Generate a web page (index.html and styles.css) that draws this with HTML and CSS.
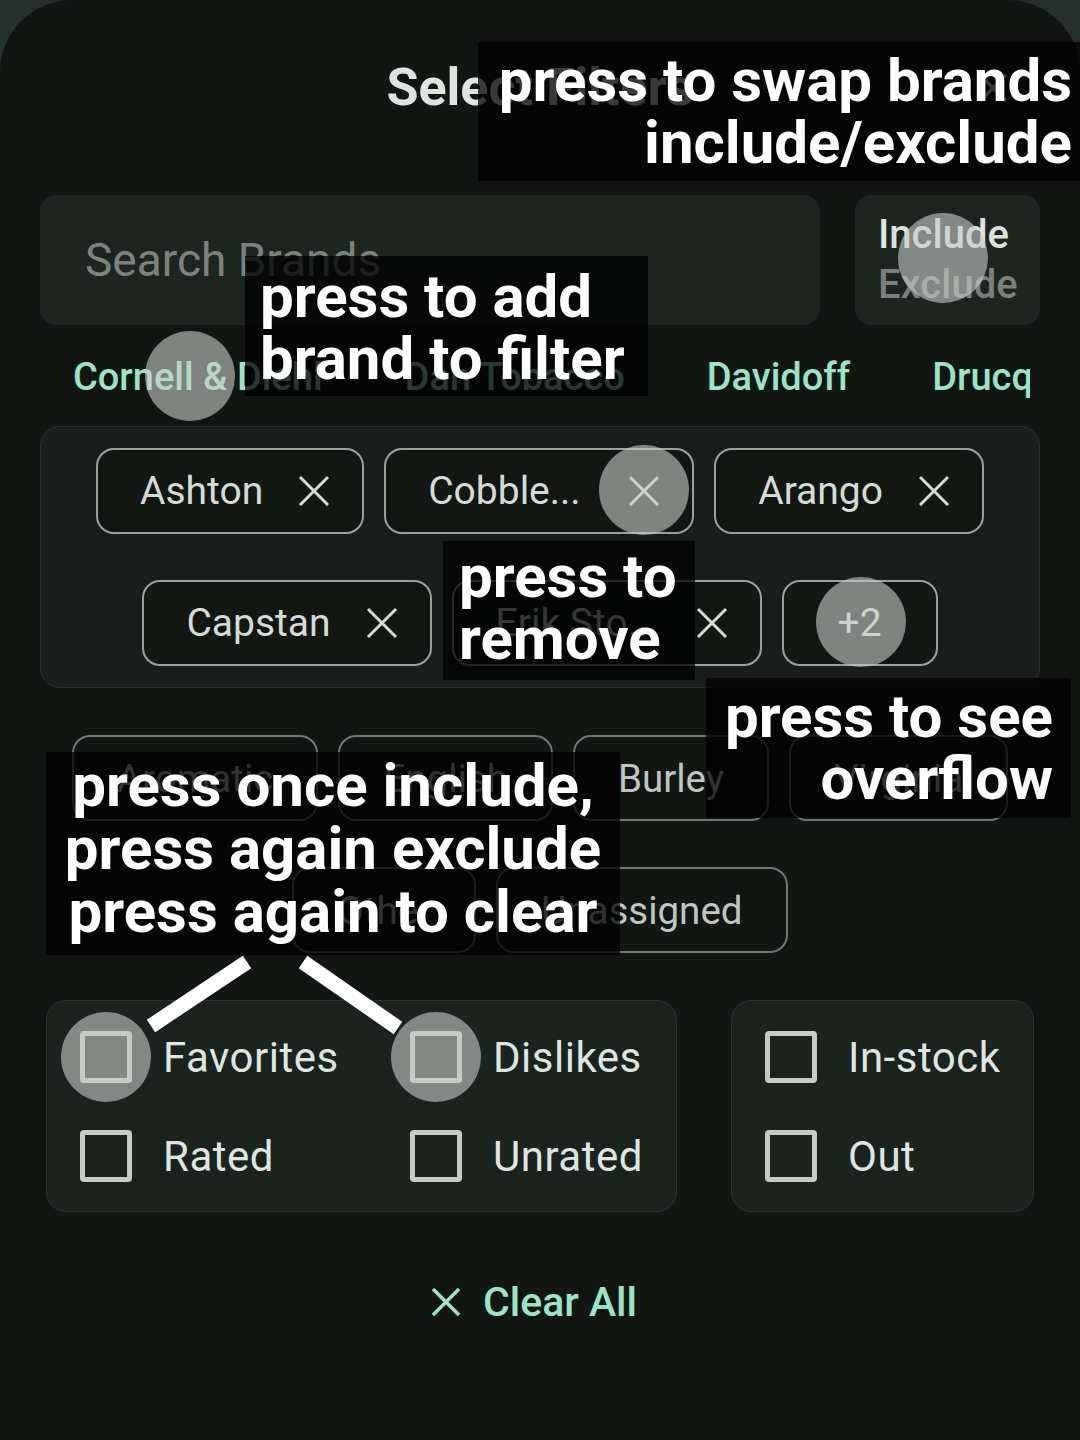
FILE: index.html
```html
<!DOCTYPE html>
<html>
<head>
<meta charset="utf-8">
<link rel="stylesheet" href="styles.css">
</head>
<body>
<div class="sheet">
  <div class="header">
    <div></div>
    <h1 class="title">Select Filters</h1>
    <div class="close-wrap">
      <svg class="close-icon" viewBox="0 0 34 34"><path d="M4 4 L30 30 M30 4 L4 30" /></svg>
    </div>
  </div>

  <div class="search-row">
    <div class="search-field">Search Brands</div>
    <div class="toggle">
      <span class="toggle-on">Include</span>
      <span class="toggle-off">Exclude</span>
    </div>
  </div>

  <div class="suggest-row">
    <span class="suggest">Cornell &amp; Diehl</span>
    <span class="suggest">Dan Tobacco</span>
    <span class="suggest">Davidoff</span>
    <span class="suggest">Drucq</span>
  </div>

  <div class="selected-box">
    <div class="chip-row">
      <div class="chip sel">Ashton<svg class="x" viewBox="0 0 34 34"><path d="M3 3 L31 31 M31 3 L3 31"/></svg></div>
      <div class="chip sel"><span class="trunc">Cobble...</span><svg class="x" viewBox="0 0 34 34"><path d="M3 3 L31 31 M31 3 L3 31"/></svg></div>
      <div class="chip sel">Arango<svg class="x" viewBox="0 0 34 34"><path d="M3 3 L31 31 M31 3 L3 31"/></svg></div>
    </div>
    <div class="chip-row">
      <div class="chip sel">Capstan<svg class="x" viewBox="0 0 34 34"><path d="M3 3 L31 31 M31 3 L3 31"/></svg></div>
      <div class="chip sel"><span class="trunc">Erik Sto...</span><svg class="x" viewBox="0 0 34 34"><path d="M3 3 L31 31 M31 3 L3 31"/></svg></div>
      <div class="chip sel more">+2</div>
    </div>
  </div>

  <div class="cat-box">
    <div class="chip-row">
      <div class="chip cat">Aromatic</div>
      <div class="chip cat">English</div>
      <div class="chip cat">Burley</div>
      <div class="chip cat">Virginia</div>
    </div>
    <div class="chip-row">
      <div class="chip cat">Other</div>
      <div class="chip cat">Unassigned</div>
    </div>
  </div>

  <div class="panels">
    <div class="panel panel-left">
      <label class="check"><span class="box"></span>Favorites</label>
      <label class="check"><span class="box"></span>Dislikes</label>
      <label class="check"><span class="box"></span>Rated</label>
      <label class="check"><span class="box"></span>Unrated</label>
    </div>
    <div class="panel panel-right">
      <label class="check"><span class="box"></span>In-stock</label>
      <label class="check"><span class="box"></span>Out</label>
    </div>
  </div>

  <div class="clear-row">
    <div class="clear-btn">
      <svg class="clear-x" viewBox="0 0 30 30"><path d="M2 2 L28 28 M28 2 L2 28"/></svg>
      <span>Clear All</span>
    </div>
  </div>
</div>

<!-- touch indicators -->
<div class="touch t1"></div>
<div class="touch t2"></div>
<div class="touch t3"></div>
<div class="touch t4"></div>
<div class="touch t5"></div>
<div class="touch t6"></div>

<!-- annotations -->
<div class="note n1">press to swap brands<br>include/exclude</div>
<div class="note n2">press to add<br>brand to filter</div>
<div class="note n3">press to<br>remove</div>
<div class="note n4">press to see<br>overflow</div>
<div class="note n5">press once include,<br>press again exclude<br>press again to clear</div>

<svg class="connectors" viewBox="0 0 1080 1440">
  <line x1="247" y1="962" x2="151" y2="1026" />
  <line x1="303" y1="962" x2="398" y2="1028" />
</svg>
</body>
</html>
```

FILE: styles.css
```css
html, body {
  margin: 0;
  padding: 0;
}
body {
  width: 1080px;
  height: 1440px;
  background: #26302c;
  font-family: Roboto, "Noto Sans", sans-serif;
  position: relative;
  overflow: hidden;
}
.sheet {
  background: #111613;
  border-radius: 72px 72px 0 0;
  height: 1440px;
  box-sizing: border-box;
  padding-top: 58px;
}

/* header */
.header {
  display: grid;
  grid-template-columns: 1fr auto 1fr;
  align-items: center;
  height: 60px;
}
.title {
  margin: 0;
  font-size: 52px;
  font-weight: 700;
  color: #dfe4e0;
  line-height: 60px;
}
.close-wrap {
  display: flex;
  justify-content: flex-end;
  padding-right: 70px;
}
.close-icon {
  width: 34px;
  height: 34px;
  fill: none;
  stroke: #d5dbd6;
  stroke-width: 3.5;
}

/* search row */
.search-row {
  display: flex;
  gap: 35px;
  margin: 77px 40px 0 40px;
  height: 130px;
}
.search-field {
  flex: 1;
  background: #1d2521;
  border-radius: 16px;
  display: flex;
  align-items: center;
  padding-left: 45px;
  font-size: 46px;
  color: #7b837e;
}
.toggle {
  width: 185px;
  background: #1d2521;
  border-radius: 16px;
  display: flex;
  flex-direction: column;
  justify-content: center;
  padding-left: 23px;
  box-sizing: border-box;
  font-size: 40px;
  font-weight: 500;
  line-height: 50px;
}
.toggle-on { color: #dce2dd; }
.toggle-off { color: #79817c; }

/* suggestions */
.suggest-row {
  display: flex;
  margin: 24px 50px 0 32px;
  height: 56px;
  overflow: hidden;
  white-space: nowrap;
}
.suggest {
  flex: none;
  padding: 0 41px;
  font-size: 38px;
  font-weight: 500;
  line-height: 56px;
  color: #9de3c5;
}

/* chips */
.selected-box {
  margin: 21px 40px 0 40px;
  background: #181e1b;
  border: 1px solid #28302c;
  border-radius: 20px;
  padding: 21px 0;
  display: flex;
  flex-direction: column;
  gap: 46px;
}
.chip-row {
  display: flex;
  justify-content: center;
  gap: 20px;
}
.chip {
  height: 86px;
  box-sizing: border-box;
  border-radius: 18px;
  display: flex;
  align-items: center;
  font-size: 39px;
  white-space: nowrap;
}
.chip.sel {
  border: 2px solid #9aa29d;
  background: #121714;
  color: #d5dbd6;
  padding: 0 31px 0 42px;
}
.trunc {
  width: 165px;
  overflow: hidden;
}
.chip.sel .x {
  width: 34px;
  height: 34px;
  margin-left: 34px;
  fill: none;
  stroke: #d5dbd6;
  stroke-width: 3;
}
.chip.sel.more {
  padding: 0 54px;
}
.cat-box {
  margin-top: 47px;
  display: flex;
  flex-direction: column;
  gap: 46px;
}
.chip.cat {
  border: 2px solid #6f7772;
  color: #bfc6c1;
  padding: 0 43px;
  font-size: 38.5px;
}

/* checkbox panels */
.panels {
  display: flex;
  gap: 54px;
  margin: 47px 46px 0 46px;
}
.panel {
  height: 212px;
  box-sizing: border-box;
  background: #1b231f;
  border: 1px solid #2a332e;
  border-radius: 20px;
  display: grid;
  grid-auto-rows: 52px;
  row-gap: 47px;
  padding: 30px 0 0 33px;
}
.panel-left {
  width: 631px;
  grid-template-columns: 330px 1fr;
}
.panel-right {
  flex: 1;
  grid-template-columns: 1fr;
}
.check {
  display: flex;
  align-items: center;
  gap: 31px;
  font-size: 42px;
  letter-spacing: 0.5px;
  color: #dfe5e0;
}
.box {
  width: 52px;
  height: 52px;
  box-sizing: border-box;
  border: 5px solid #c3cdc6;
  border-radius: 4px;
  flex: none;
}

/* clear */
.clear-row {
  display: flex;
  justify-content: center;
  margin-top: 60px;
}
.clear-btn {
  display: flex;
  align-items: center;
  gap: 22px;
  height: 60px;
  font-size: 41px;
  font-weight: 500;
  color: #9de3c5;
  padding-right: 12px;
}
.clear-x {
  width: 30px;
  height: 30px;
  fill: none;
  stroke: #9de3c5;
  stroke-width: 3.5;
}

/* touch indicators */
.touch {
  position: absolute;
  width: 90px;
  height: 90px;
  border-radius: 50%;
  background: rgba(200, 205, 202, 0.6);
}
.t1 { left: 898px; top: 213px; }
.t2 { left: 145px; top: 331px; }
.t3 { left: 599px; top: 445px; }
.t4 { left: 816px; top: 577px; }
.t5 { left: 61px; top: 1012px; }
.t6 { left: 391px; top: 1012px; }

/* annotations */
.note {
  position: absolute;
  box-sizing: border-box;
  background: rgba(0, 0, 0, 0.75);
  color: #ffffff;
  font-family: Roboto, "Noto Sans", sans-serif;
  font-weight: 700;
  font-size: 60px;
  line-height: 62px;
  white-space: nowrap;
}
.n1 {
  left: 478px; top: 42px; width: 602px; height: 139px;
  text-align: right;
  padding: 8px 8px 0 0;
}
.n2 {
  left: 245px; top: 256px; width: 403px; height: 140px;
  padding: 10px 0 0 15px;
}
.n3 {
  left: 443px; top: 541px; width: 252px; height: 139px;
  padding: 5px 0 0 16px;
}
.n4 {
  left: 706px; top: 678px; width: 365px; height: 140px;
  text-align: right;
  padding: 8px 18px 0 0;
}
.n5 {
  left: 46px; top: 752px; width: 574px; height: 203px;
  text-align: center;
  line-height: 63px;
  padding-top: 2px;
}
.connectors {
  position: absolute;
  left: 0;
  top: 0;
  width: 1080px;
  height: 1440px;
  pointer-events: none;
}
.connectors line {
  stroke: #ffffff;
  stroke-width: 15;
}
```
